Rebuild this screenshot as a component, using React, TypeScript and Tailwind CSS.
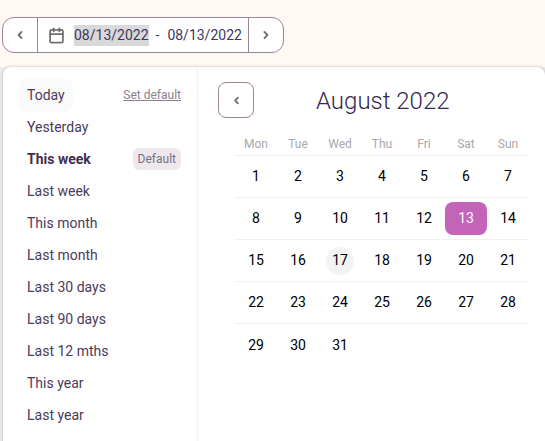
import { Calendar, ChevronLeft, ChevronRight } from 'lucide-react';

const PRESETS = [
	'Today',
	'Yesterday',
	'This week',
	'Last week',
	'This month',
	'Last month',
	'Last 30 days',
	'Last 90 days',
	'Last 12 mths',
	'This year',
	'Last year',
];

const WEEKDAYS = ['Mon', 'Tue', 'Wed', 'Thu', 'Fri', 'Sat', 'Sun'];

const WEEKS = [
	[1, 2, 3, 4, 5, 6, 7],
	[8, 9, 10, 11, 12, 13, 14],
	[15, 16, 17, 18, 19, 20, 21],
	[22, 23, 24, 25, 26, 27, 28],
	[29, 30, 31],
];

const dayClass = (day: number) => {
	if (day === 13) return 'w-[42px] h-[33px] rounded-lg bg-[#c464b8] text-white';
	if (day === 17) return 'w-[28px] h-[28px] rounded-full bg-[#f3f3f3] text-black';
	return 'w-[42px] h-[33px] text-black';
};

export default function App() {
	return (
		<div className="w-[545px] h-[441px] overflow-hidden bg-[#fff8f3] font-['Roboto',sans-serif]">
			<div className="pt-[17px] pl-[2px]">
				<div className="flex w-[282px] h-[36px] items-center rounded-xl border border-[#9b8499] bg-white">
					<button className="flex w-[35px] h-full items-center justify-center border-r border-[#9b8499] text-[#777777]">
						<ChevronLeft size={12} strokeWidth={4} />
					</button>
					<div className="flex flex-1 items-center pl-[10px] text-[14px] text-[#3f3560]">
						<Calendar size={17} strokeWidth={2.5} className="mr-[9px] text-[#6f6f6f]" />
						<span className="bg-[#d9d9d9]">08/13/2022</span>
						<span className="ml-[7px] mr-[8px]">-</span>
						<span>08/13/2022</span>
					</div>
					<button className="flex w-[35px] h-full items-center justify-center border-l border-[#9b8499] text-[#777777]">
						<ChevronRight size={12} strokeWidth={4} />
					</button>
				</div>
			</div>
			<div className="mt-[14px] pl-[3px] bg-[#efebed]">
				<div className="flex h-[400px] rounded-lg bg-white shadow-[0_0_3px_rgba(60,50,60,0.35)]">
					<div className="w-[195px] border-r border-[#f0eef0] pl-[16px] pt-[12px] pr-[16px] text-[14px] text-[#4c3a5c]">
						{PRESETS.map((label, i) => (
							<div key={label} className="flex h-[32px] items-center justify-between">
								<span
									className={`px-[8px] py-[6px] rounded-lg ${i === 0 ? 'bg-[#fafafa]' : ''} ${i === 2 ? 'font-bold text-[#432e4d]' : ''}`}
								>
									{label}
								</span>
								{i === 0 && <span className="text-[12px] text-[#8c7f90] underline">Set default</span>}
								{i === 2 && (
									<span className="rounded-md bg-[#eee8ee] px-[5px] py-[2px] text-[12px] text-[#7c6c80]">Default</span>
								)}
							</div>
						))}
					</div>
					<div className="flex-1 pl-[20px] pt-[15px]">
						<div className="flex items-center">
							<button className="flex w-[36px] h-[36px] items-center justify-center rounded-lg border border-[#9b8499] text-[#777777]">
								<ChevronLeft size={11} strokeWidth={4} />
							</button>
							<div className="ml-[62px] h-[36px] pt-[1px] text-[24px] leading-[36px] font-light text-[#33264f]">
								August 2022
							</div>
						</div>
						<div className="ml-[17px] mt-[9px] w-[294px]">
							<div className="flex h-[29px] items-start pt-[8px] border-b border-[#f0f0f0] text-[12px] text-[#a9a9a9]">
								{WEEKDAYS.map((d) => (
									<div key={d} className="w-[42px] text-center">{d}</div>
								))}
							</div>
							{WEEKS.map((week, i) => (
								<div key={i} className={`flex h-[42px] items-center text-[14px] ${i < 4 ? 'border-b border-[#f0f0f0]' : ''}`}>
									{week.map((day) => (
										<div key={day} className="flex w-[42px] justify-center">
											<div className={`flex items-center justify-center ${dayClass(day)}`}>{day}</div>
										</div>
									))}
								</div>
							))}
						</div>
					</div>
				</div>
			</div>
		</div>
	);
}
